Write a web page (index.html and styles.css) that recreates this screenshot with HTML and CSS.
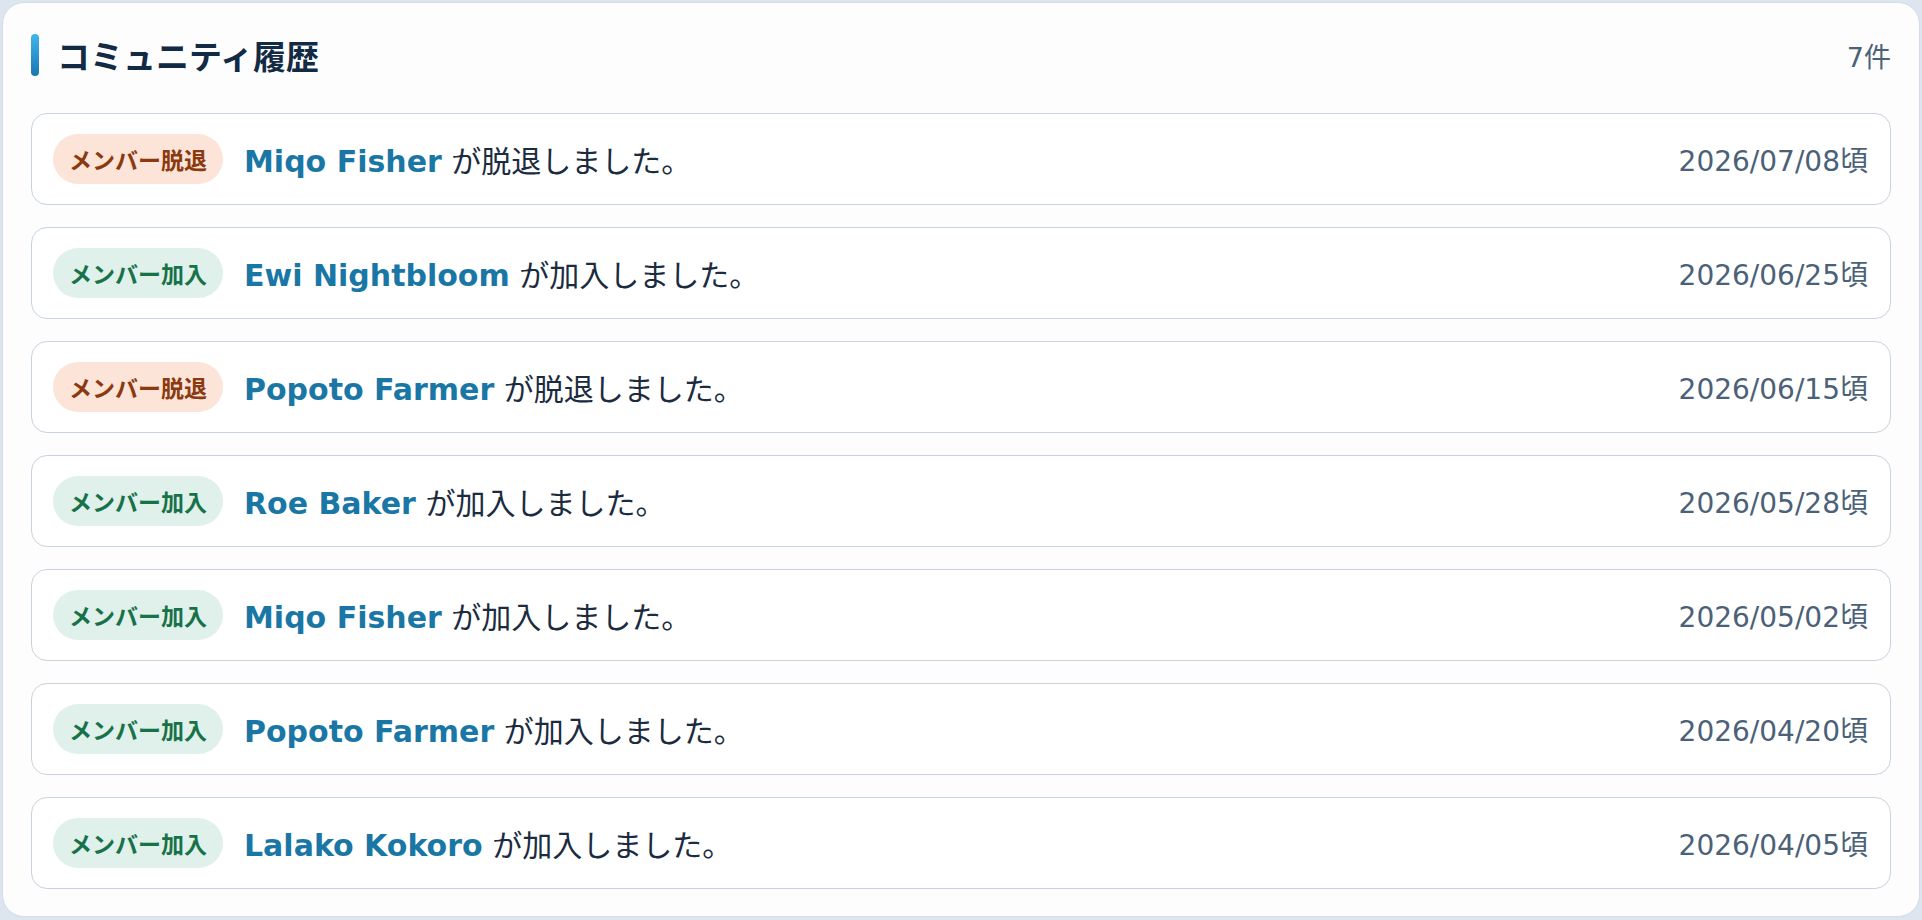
FILE: index.html
```html
<!DOCTYPE html>
<html lang="ja">
<head>
    <meta charset="UTF-8">
    <meta name="viewport" content="width=device-width, initial-scale=1.0">
    <title>コミュニティ履歴</title>
    <link rel="stylesheet" href="styles.css">
</head>
<body>
    <div class="history-card">
        <div class="history-header">
            <h2 class="history-title">コミュニティ履歴</h2>
            <span class="history-count">7件</span>
        </div>

        <ul class="history-list">
            <li class="history-item">
                <span class="badge badge-leave">メンバー脱退</span>
                <span class="history-text"><span class="member-name">Miqo Fisher</span> が脱退しました。</span>
                <span class="history-date">2026/07/08頃</span>
            </li>
            <li class="history-item">
                <span class="badge badge-join">メンバー加入</span>
                <span class="history-text"><span class="member-name">Ewi Nightbloom</span> が加入しました。</span>
                <span class="history-date">2026/06/25頃</span>
            </li>
            <li class="history-item">
                <span class="badge badge-leave">メンバー脱退</span>
                <span class="history-text"><span class="member-name">Popoto Farmer</span> が脱退しました。</span>
                <span class="history-date">2026/06/15頃</span>
            </li>
            <li class="history-item">
                <span class="badge badge-join">メンバー加入</span>
                <span class="history-text"><span class="member-name">Roe Baker</span> が加入しました。</span>
                <span class="history-date">2026/05/28頃</span>
            </li>
            <li class="history-item">
                <span class="badge badge-join">メンバー加入</span>
                <span class="history-text"><span class="member-name">Miqo Fisher</span> が加入しました。</span>
                <span class="history-date">2026/05/02頃</span>
            </li>
            <li class="history-item">
                <span class="badge badge-join">メンバー加入</span>
                <span class="history-text"><span class="member-name">Popoto Farmer</span> が加入しました。</span>
                <span class="history-date">2026/04/20頃</span>
            </li>
            <li class="history-item">
                <span class="badge badge-join">メンバー加入</span>
                <span class="history-text"><span class="member-name">Lalako Kokoro</span> が加入しました。</span>
                <span class="history-date">2026/04/05頃</span>
            </li>
        </ul>
    </div>
</body>
</html>
```

FILE: styles.css
```css
body {
    font-family: "DejaVu Sans", "Noto Sans CJK JP", sans-serif;
    background-color: #dde5ee;
    margin: 0;
    padding: 2px;
}
.history-card {
    background-color: #fdfdfe;
    border: 1px solid #d3dce7;
    border-radius: 22px;
    padding: 31px 28px 27px 28px;
}
.history-header {
    display: flex;
    align-items: center;
    justify-content: space-between;
    height: 42px;
    margin-bottom: 37px;
}
.history-title {
    display: flex;
    align-items: center;
    gap: 18px;
    margin: 0;
    font-family: "Noto Sans CJK JP", sans-serif;
    font-size: 33px;
    font-weight: 700;
    color: #132a44;
}
.history-title::before {
    content: "";
    width: 8px;
    height: 42px;
    border-radius: 4px;
    background: linear-gradient(to bottom, #41b6ea, #1876b2);
}
.history-count {
    font-size: 27px;
    color: #4b6178;
}
.history-list {
    list-style: none;
    margin: 0;
    padding: 0;
    display: flex;
    flex-direction: column;
    gap: 22px;
}
.history-item {
    display: flex;
    align-items: center;
    gap: 21px;
    padding: 20px 22px 20px 21px;
    background-color: #fff;
    border: 1px solid #c9d3df;
    border-radius: 16px;
}
.badge {
    display: inline-flex;
    align-items: center;
    height: 50px;
    padding: 0 16px;
    border-radius: 25px;
    font-family: "Noto Sans CJK JP", sans-serif;
    font-size: 23px;
    font-weight: 700;
    white-space: nowrap;
}
.badge-leave {
    background-color: #fde4d9;
    color: #8a3a0e;
}
.badge-join {
    background-color: #e0f0ea;
    color: #177249;
}
.history-text {
    font-size: 30px;
    color: #1b2b40;
    white-space: nowrap;
}
.member-name {
    font-weight: 700;
    color: #1a77a5;
}
.history-date {
    margin-left: auto;
    font-size: 28px;
    color: #4b6178;
    white-space: nowrap;
}
```
